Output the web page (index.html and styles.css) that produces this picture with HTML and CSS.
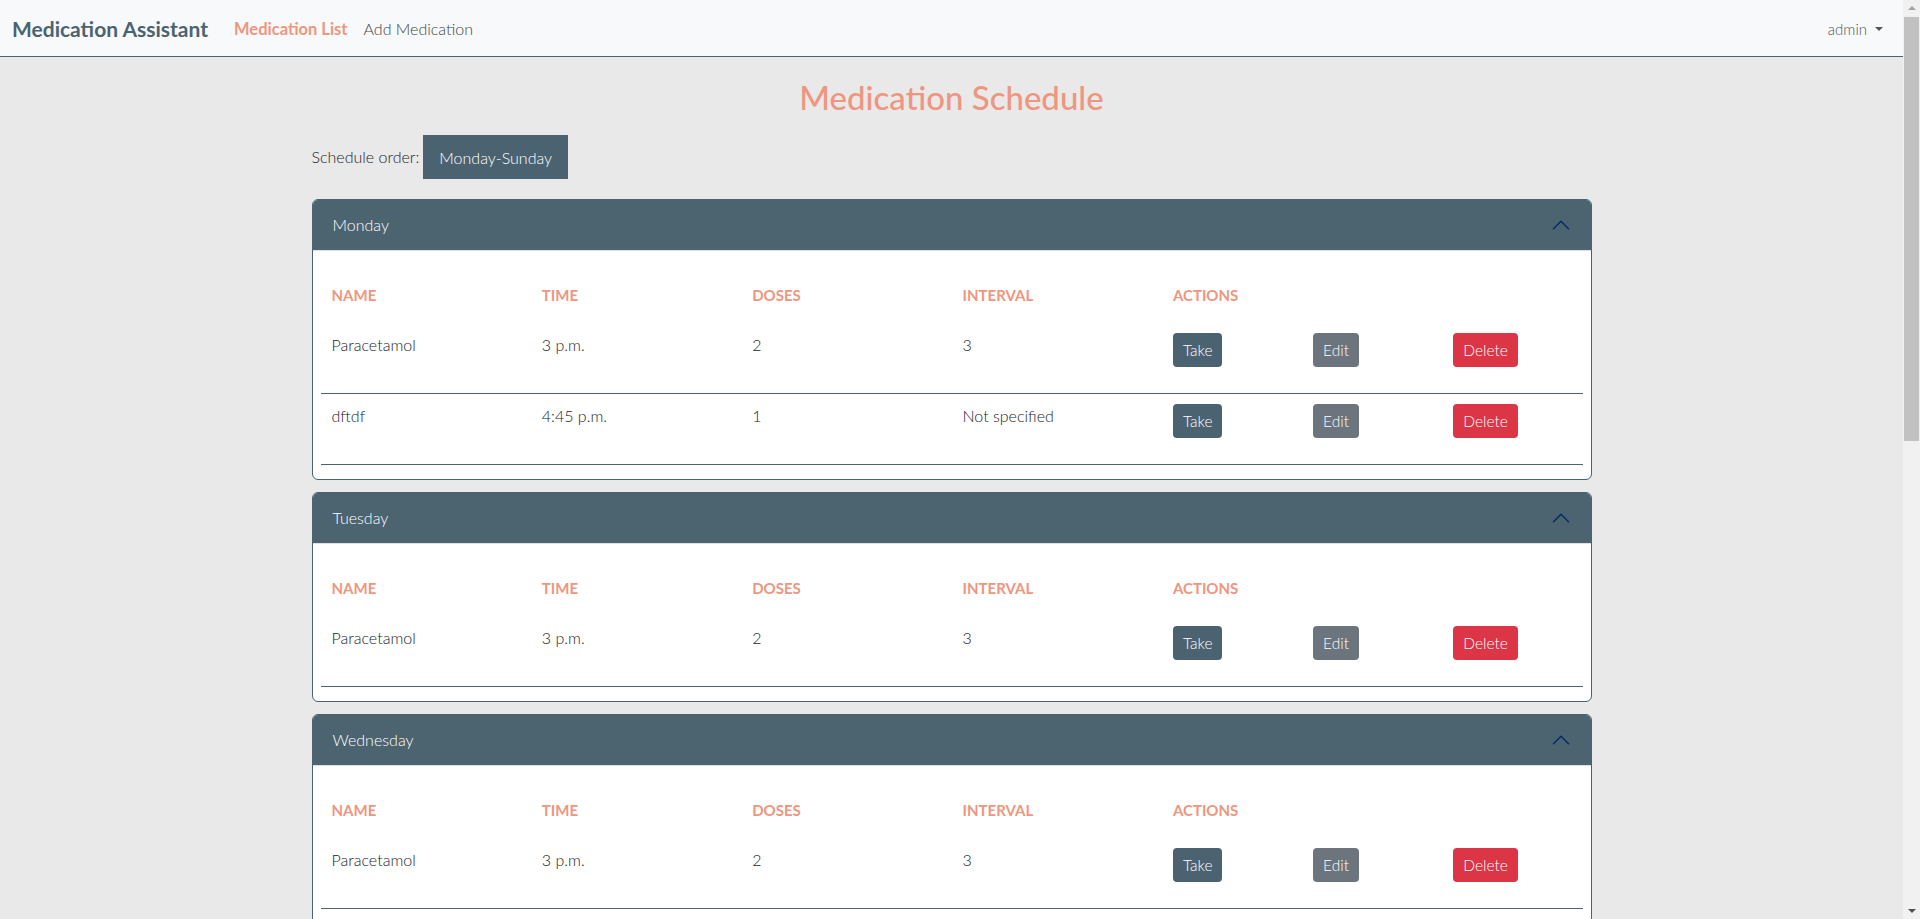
FILE: index.html
```html
<!DOCTYPE html>
<html lang="en">
<head>
<meta charset="utf-8">
<title>Medication Assistant</title>
<link rel="stylesheet" href="styles.css">
</head>
<body>
<nav class="navbar">
  <div class="nav-left">
    <a class="brand" href="#">Medication Assistant</a>
    <a class="nav-link active" href="#">Medication List</a>
    <a class="nav-link" href="#">Add Medication</a>
  </div>
  <div class="nav-user">admin <span class="caret"></span></div>
</nav>

<main class="container">
  <h1 class="page-title">Medication Schedule</h1>
  <div class="order-row">
    <span class="order-label">Schedule order:</span>
    <button class="btn-order">Monday-Sunday</button>
  </div>

  <div class="days">
    <section class="day-card">
      <div class="day-header"><span>Monday</span><svg class="chev" viewBox="0 0 16 16"><path d="M2 11L8 5L14 11"/></svg></div>
      <div class="day-body">
        <table class="med-table">
          <thead><tr><th class="w-main">NAME</th><th class="w-main">TIME</th><th class="w-main">DOSES</th><th class="w-main">INTERVAL</th><th class="w-act">ACTIONS</th><th class="w-act"></th><th class="w-act"></th></tr></thead>
          <tbody>
            <tr><td>Paracetamol</td><td>3 p.m.</td><td>2</td><td>3</td><td><button class="btn btn-take">Take</button></td><td><button class="btn btn-edit">Edit</button></td><td><button class="btn btn-delete">Delete</button></td></tr>
            <tr><td>dftdf</td><td>4:45 p.m.</td><td>1</td><td>Not specified</td><td><button class="btn btn-take">Take</button></td><td><button class="btn btn-edit">Edit</button></td><td><button class="btn btn-delete">Delete</button></td></tr>
          </tbody>
        </table>
      </div>
    </section>

    <section class="day-card">
      <div class="day-header"><span>Tuesday</span><svg class="chev" viewBox="0 0 16 16"><path d="M2 11L8 5L14 11"/></svg></div>
      <div class="day-body">
        <table class="med-table">
          <thead><tr><th class="w-main">NAME</th><th class="w-main">TIME</th><th class="w-main">DOSES</th><th class="w-main">INTERVAL</th><th class="w-act">ACTIONS</th><th class="w-act"></th><th class="w-act"></th></tr></thead>
          <tbody>
            <tr><td>Paracetamol</td><td>3 p.m.</td><td>2</td><td>3</td><td><button class="btn btn-take">Take</button></td><td><button class="btn btn-edit">Edit</button></td><td><button class="btn btn-delete">Delete</button></td></tr>
          </tbody>
        </table>
      </div>
    </section>

    <section class="day-card">
      <div class="day-header"><span>Wednesday</span><svg class="chev" viewBox="0 0 16 16"><path d="M2 11L8 5L14 11"/></svg></div>
      <div class="day-body">
        <table class="med-table">
          <thead><tr><th class="w-main">NAME</th><th class="w-main">TIME</th><th class="w-main">DOSES</th><th class="w-main">INTERVAL</th><th class="w-act">ACTIONS</th><th class="w-act"></th><th class="w-act"></th></tr></thead>
          <tbody>
            <tr><td>Paracetamol</td><td>3 p.m.</td><td>2</td><td>3</td><td><button class="btn btn-take">Take</button></td><td><button class="btn btn-edit">Edit</button></td><td><button class="btn btn-delete">Delete</button></td></tr>
          </tbody>
        </table>
      </div>
    </section>
  </div>
</main>

<div class="scrollbar" aria-hidden="true">
  <span class="sb-arrow sb-up"></span>
  <span class="sb-thumb"></span>
  <span class="sb-arrow sb-down"></span>
</div>
</body>
</html>
```

FILE: styles.css
```css
* { box-sizing: border-box; }

html, body {
  margin: 0;
  padding: 0;
}

body {
  background: #e9e9e9;
  font-family: Lato, "Open Sans", "Liberation Sans", sans-serif;
  font-weight: 300;
  font-size: 16px;
  line-height: 24px;
  color: #212529;
  margin-right: 17px;
}

.navbar {
  height: 57px;
  background: #f8f9fa;
  border-bottom: 1px solid #4b6371;
  display: flex;
  align-items: center;
  justify-content: space-between;
  padding: 0 20px 0 12px;
}

.nav-left {
  display: flex;
  align-items: center;
  padding-top: 2px;
}

.brand {
  font-size: 21px;
  font-weight: 700;
  color: #4b6371;
  text-decoration: none;
  margin-right: 26px;
}

.nav-link {
  font-size: 16px;
  text-decoration: none;
  color: #444;
  margin-right: 16px;
  font-weight: 300;
}

.nav-link.active {
  color: #ee9680;
  font-weight: 700;
  font-size: 16.5px;
}

.nav-user {
  font-size: 15px;
  color: #555;
  font-weight: 300;
  display: flex;
  align-items: center;
  padding-top: 2px;
}

.caret {
  display: inline-block;
  margin-left: 8px;
  width: 0;
  height: 0;
  border-left: 4px solid transparent;
  border-right: 4px solid transparent;
  border-top: 4px solid #555;
}

.container {
  width: 1280px;
  margin: 0 auto;
  padding-bottom: 40px;
}

.page-title {
  margin: 21px 0 0;
  text-align: center;
  font-size: 33px;
  line-height: 38px;
  font-weight: 500;
  color: #ee9680;
}

.order-row {
  margin-top: 19px;
  display: flex;
  align-items: center;
  gap: 4px;
}

.order-label {
  font-size: 16px;
  font-weight: 300;
}

.btn-order {
  height: 44px;
  padding: 0 16px;
  border: none;
  border-radius: 0;
  background: #4b6371;
  color: #fff;
  font-family: inherit;
  font-weight: 300;
  font-size: 16px;
}

.days {
  margin-top: 20px;
  display: flex;
  flex-direction: column;
  gap: 12px;
}

.day-card {
  background: #fff;
  border: 1px solid #4b6371;
  border-radius: 6px;
  overflow: hidden;
}

.day-header {
  background: #4c6370;
  color: #fff;
  height: 51px;
  padding: 0 20px;
  display: flex;
  align-items: center;
  justify-content: space-between;
  border-bottom: 1px solid #dee2e6;
  font-size: 16px;
}

.chev {
  width: 20px;
  height: 20px;
  fill: none;
  stroke: #052c65;
  stroke-width: 1.2;
  stroke-linecap: round;
  stroke-linejoin: round;
}

.day-body {
  padding: 16px 8px 14px;
}

.med-table {
  width: 100%;
  border-collapse: collapse;
  table-layout: fixed;
}

.w-main { width: 16.64%; }
.w-act { width: 11.09%; }

.med-table th {
  text-align: left;
  color: #ee9680;
  font-weight: 700;
  font-size: 15px;
  padding: 16px 11px;
  line-height: 24px;
}

.med-table td {
  vertical-align: top;
  padding: 10px 11px 26px;
  line-height: 24px;
  font-size: 16px;
}

.med-table tbody tr {
  border-bottom: 1px solid #4b6371;
}

.btn {
  height: 34px;
  padding: 0 10px;
  border: none;
  border-radius: 4px;
  color: #fff;
  font-family: inherit;
  font-weight: 300;
  font-size: 15.5px;
  line-height: 34px;
}

.btn-take { background: #4b6371; }
.btn-edit { background: #6c757d; }
.btn-delete { background: #dc3545; }

.scrollbar {
  position: fixed;
  top: 0;
  right: 0;
  width: 17px;
  height: 100vh;
  background: #f1f1f1;
  display: flex;
  flex-direction: column;
  align-items: center;
}

.sb-arrow {
  width: 0;
  height: 0;
  border-left: 4px solid transparent;
  border-right: 4px solid transparent;
}

.sb-up {
  margin-top: 6px;
  border-bottom: 4px solid #a3a3a3;
}

.sb-thumb {
  margin-top: 7px;
  width: 15px;
  height: 424px;
  background: #c1c1c1;
}

.sb-down {
  margin-top: auto;
  margin-bottom: 6px;
  border-top: 4px solid #505050;
}
```
